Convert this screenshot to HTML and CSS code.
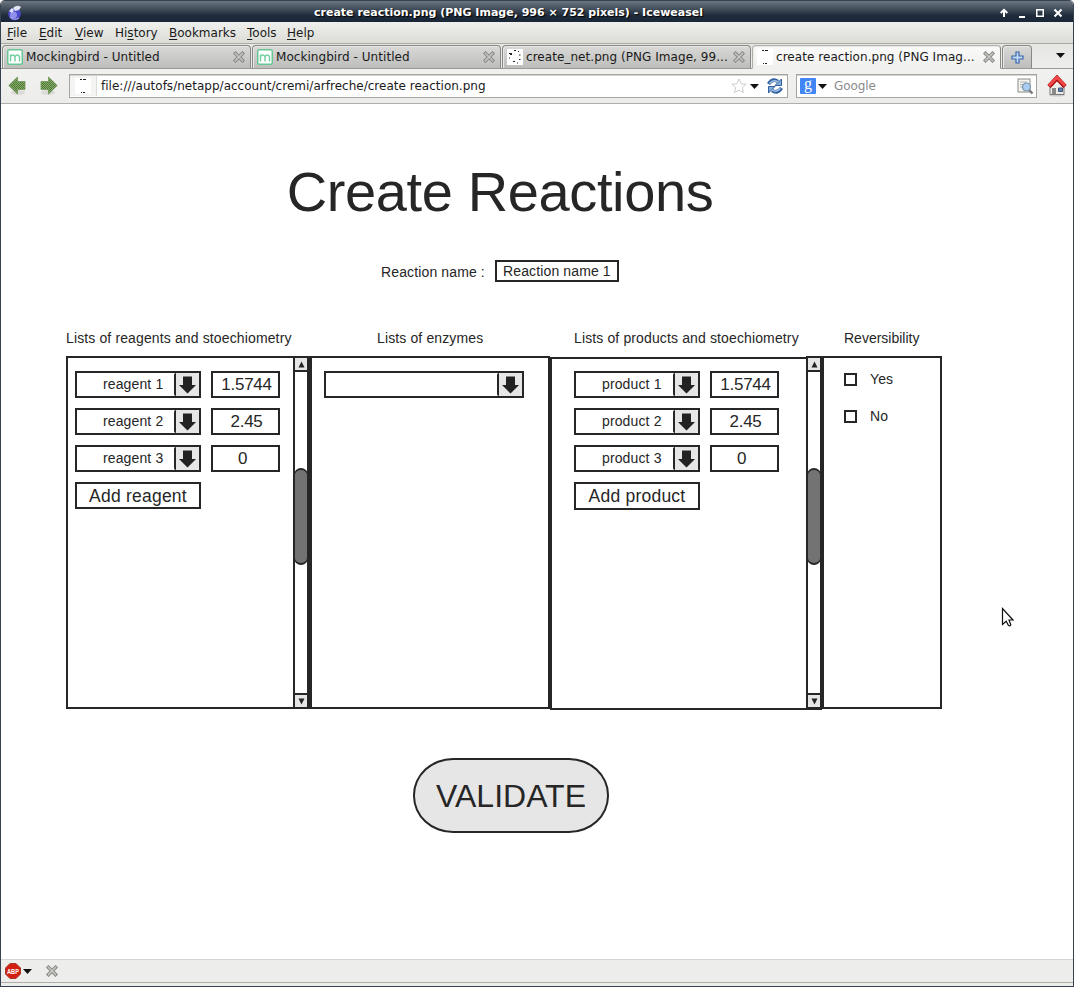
FILE: index.html
```html
<!DOCTYPE html>
<html lang="en">
<head>
<meta charset="utf-8">
<title>create reaction.png</title>
<link rel="stylesheet" href="styles.css">
</head>
<body>
<svg class="defs" width="0" height="0" aria-hidden="true">
  <defs>
    <pattern id="dither" width="2" height="2" patternUnits="userSpaceOnUse"><rect width="2" height="2" fill="#86ab6c"/><path d="M0 0h1v1H0zM1 1h1v1H1z" fill="#4d7a33"/></pattern>
    <symbol id="close" viewBox="0 0 12 12"><path d="M2.500 2.500l7 7m0-7l-7 7" stroke="#868783" stroke-width="3.600" stroke-linecap="square"/><path d="M2.500 2.500l7 7m0-7l-7 7" stroke="#c6c7c3" stroke-width="1.600" stroke-linecap="square"/></symbol>
    <symbol id="drop" viewBox="0 0 9 5"><path d="M0 0h9L4.500 5z" fill="#111"/></symbol>
    <symbol id="bird" viewBox="0 0 16 16"><rect x=".75" y=".75" width="14.500" height="14.500" rx="1.500" fill="#fff" stroke="#66c795" stroke-width="1.500"/><path d="M3.500 12.500V5.500M3.500 7.500q2.200-3 4.500 0v5M8 7.500q2.400-3 4.500 0v5" fill="none" stroke="#6fcf9e" stroke-width="1.400"/></symbol>
    <symbol id="arrow" viewBox="0 0 17 18"><path d="M4 .5h9V9h4l-8.500 8.500L0 9h4z" fill="#222"/></symbol>
    <symbol id="page" viewBox="0 0 16 16"><rect width="16" height="16" fill="#fff"/><path d="M5 1.500h2M8 1.500h3M6 14.500h1M8 14.500h2" stroke="#222"/></symbol>
    <symbol id="nav" viewBox="0 0 18 20"><ellipse cx="10" cy="16.500" rx="7" ry="2.500" fill="#dadad8"/><path d="M.8 9.500L9.500 1v4.500H17v8H9.500V18z" fill="url(#dither)" stroke="#6c9152" stroke-width=".7"/></symbol>
  </defs>
</svg>
<div class="window">
  <header class="titlebar">
    <svg class="app-icon" width="16" height="16" viewBox="0 0 16 16"><circle cx="7.500" cy="9" r="6.300" fill="#4a4ac9"/><circle cx="6.500" cy="10" r="3.500" fill="#8f90ee"/><path d="M2 6l3-3 2 2-2 3zM6 3q4-4 8-1l-2 3-4 1z" fill="#dfe3f5"/><path d="M3 12q4 4 9 1" stroke="#b5b6ef" fill="none"/></svg>
    <div class="title">create reaction.png (PNG Image, 996 × 752 pixels) - Iceweasel</div>
    <svg class="controls" width="68" height="16" viewBox="0 0 68 16" fill="none" stroke="#fff" stroke-width="2"><path d="M7 12V5M3.700 8L7 4.800 10.300 8"/><path d="M22 12H28" stroke-width="2"/><rect x="39.750" y="4.750" width="6.500" height="6.500" stroke-width="1.500"/><path d="M57.500 4.500l7 7m0-7l-7 7"/></svg>
  </header>
  <nav class="menu"><span class="m1"><u>F</u>ile</span><span class="m2"><u>E</u>dit</span><span class="m3"><u>V</u>iew</span><span class="m4">Hi<u>s</u>tory</span><span class="m5"><u>B</u>ookmarks</span><span class="m6"><u>T</u>ools</span><span><u>H</u>elp</span></nav>
  <div class="tabs">
    <div class="tab"><svg width="16" height="16"><use href="#bird"/></svg><span class="label">Mockingbird - Untitled</span><svg width="12" height="12"><use href="#close"/></svg></div>
    <div class="tab"><svg width="16" height="16"><use href="#bird"/></svg><span class="label">Mockingbird - Untitled</span><svg width="12" height="12"><use href="#close"/></svg></div>
    <div class="tab"><svg width="16" height="16" viewBox="0 0 16 16"><rect width="16" height="16" fill="#fff"/><path d="M2 4.500h3M3 5.500h2M7 1.500h2M11 2.500h1M12 6h1.500M12 10.500h1.500M6 12.500h2M10 14h1M2 9h1" stroke="#222"/></svg><span class="label">create_net.png (PNG Image, 99...</span><svg width="12" height="12"><use href="#close"/></svg></div>
    <div class="tab active"><svg width="16" height="16"><use href="#page"/></svg><span class="label">create reaction.png (PNG Imag...</span><svg width="12" height="12"><use href="#close"/></svg></div>
    <div class="tab new"><svg width="13" height="13" viewBox="0 0 13 13"><path d="M5 1h3v4h4v3H8v4H5V8H1V5h4z" fill="#c4dcf4" stroke="#3566ad" stroke-width="1.200"/></svg></div>
    <svg class="all-tabs" width="9" height="5"><use href="#drop"/></svg>
  </div>
  <div class="toolbar">
    <svg class="back" width="18" height="20"><use href="#nav"/></svg>
    <svg class="forward" width="18" height="20"><use href="#nav"/></svg>
    <div class="field url">
      <span class="identity"><svg width="16" height="16"><use href="#page"/></svg></span>
      <span class="address">file:///autofs/netapp/account/cremi/arfreche/create reaction.png</span>
      <svg class="star" width="16" height="16" viewBox="0 0 16 16"><path d="M8 1l2.100 4.700 5 .5-3.700 3.400 1 5L8 12.200l-4.500 2.400 1.100-5L.9 6.200l5-.5z" fill="#fff" stroke="#ccc"/></svg>
      <svg class="url-drop" width="9" height="5"><use href="#drop"/></svg>
      <svg width="16" height="16" viewBox="0 0 16 16"><g fill="none" stroke="#2f5f9f" stroke-width="3.600"><path d="M1.500 6q4-6 9.500-2.500M14.500 10q-4 6-9.500 2.500"/></g><path d="M14.500 1v6.500H8zM1.500 15V8.500H8z" fill="#82add9" stroke="#2f5f9f"/><path d="M2.500 5.500q4-4.500 8.500-1.500M13.500 10.500q-4 4.500-8.500 1.500" fill="none" stroke="#a5c6e8" stroke-width="1.400"/></svg>
    </div>
    <div class="field search">
      <span class="engine">g</span>
      <svg width="9" height="5"><use href="#drop"/></svg>
      <span class="hint">Google</span>
      <svg width="17" height="17" viewBox="0 0 17 17"><rect x="1" y="1" width="12" height="13" fill="#f4f4f2" stroke="#8b8d89"/><path d="M3 4h7M3 6.500h4M3 9h3" stroke="#b4b6b2"/><path d="M12 12l3.500 3.500" stroke="#777" stroke-width="2.400"/><circle cx="9.500" cy="9" r="4" fill="#a9cdf0" stroke="#7d93a9" stroke-width="1.200"/></svg>
    </div>
    <svg class="home" width="20" height="22" viewBox="0 0 20 22"><ellipse cx="10" cy="20" rx="8" ry="1.600" fill="#ccc"/><path d="M3 11l7-7 7 7v8.500H3z" fill="#ededeb" stroke="#777"/><path d="M2 11.500l8-8.500 8 8.500" fill="none" stroke="#a40000" stroke-width="4.600"/><path d="M2 10.800L10 2.500l8 8.300" fill="none" stroke="#f04848" stroke-width="3"/><path d="M5 13h4v6.500H5z" fill="#888a85"/><path d="M11.500 13h4v3.500h-4z" fill="#5c85bb" stroke="#44546b"/></svg>
  </div>

  <main class="page">
    <h1>Create Reactions</h1>
    <div class="name-row"><label>Reaction name :</label><div class="name-box">Reaction name 1</div></div>
    <div class="columns headings">
      <div>Lists of reagents and stoechiometry</div><div class="h-enzymes">Lists of enzymes</div><div class="h-products">Lists of products and stoechiometry</div><div class="h-rev">Reversibility</div>
    </div>
    <div class="columns">
      <section class="panel reagents">
        <div class="controls-grid">
          <div class="combo"><span>reagent 1</span><b><svg width="17" height="18"><use href="#arrow"/></svg></b></div><div class="value">1.5744</div>
          <div class="combo"><span>reagent 2</span><b><svg width="17" height="18"><use href="#arrow"/></svg></b></div><div class="value">2.45</div>
          <div class="combo"><span>reagent 3</span><b><svg width="17" height="18"><use href="#arrow"/></svg></b></div><div class="value zero">0</div>
          <div class="add">Add reagent</div>
        </div>
        <div class="scroll"><i class="up"><svg width="7" height="7" viewBox="0 0 7 7"><path d="M3.500 .5L6.500 6.500h-6z" fill="#222"/></svg></i><div class="thumb"></div><i class="down"><svg width="7" height="7" viewBox="0 0 7 7"><path d="M3.500 6.500L6.500 .5h-6z" fill="#222"/></svg></i></div>
      </section>
      <section class="panel enzymes">
        <div class="combo"><span></span><b><svg width="17" height="18"><use href="#arrow"/></svg></b></div>
      </section>
      <section class="panel products">
        <div class="controls-grid">
          <div class="combo"><span>product 1</span><b><svg width="17" height="18"><use href="#arrow"/></svg></b></div><div class="value">1.5744</div>
          <div class="combo"><span>product 2</span><b><svg width="17" height="18"><use href="#arrow"/></svg></b></div><div class="value">2.45</div>
          <div class="combo"><span>product 3</span><b><svg width="17" height="18"><use href="#arrow"/></svg></b></div><div class="value zero">0</div>
          <div class="add">Add product</div>
        </div>
        <div class="scroll"><i class="up"><svg width="7" height="7" viewBox="0 0 7 7"><path d="M3.500 .5L6.500 6.500h-6z" fill="#222"/></svg></i><div class="thumb"></div><i class="down"><svg width="7" height="7" viewBox="0 0 7 7"><path d="M3.500 6.500L6.500 .5h-6z" fill="#222"/></svg></i></div>
      </section>
      <section class="panel reversibility">
        <div class="check"><i></i>Yes</div>
        <div class="check"><i></i>No</div>
      </section>
    </div>
    <div class="validate">VALIDATE</div>
    <svg class="cursor" width="14" height="21" viewBox="0 0 14 21"><path d="M1.500 1.500v16l3.700-3.300L7.500 18.500q1.500 1 2.300-.7L8 13h4z" fill="#fff" stroke="#111" stroke-width="1.200"/></svg>
  </main>

  <footer class="status">
    <svg width="16" height="16" viewBox="0 0 16 16"><path d="M5 .5h6L15.500 5v6L11 15.500H5L.5 11V5z" fill="#d3200e" stroke="#a5392b"/><text x="8" y="10.700" text-anchor="middle" textLength="12" lengthAdjust="spacingAndGlyphs" class="abp">ABP</text></svg>
    <svg class="abp-drop" width="9" height="5"><use href="#drop"/></svg>
    <svg class="status-close" width="12" height="12"><use href="#close"/></svg>
  </footer>
</div>
</body>
</html>
```
FILE: styles.css
```css
* { box-sizing: border-box; }
body { margin: 0; background: #fff; }
svg { display: block; flex: none; }
.defs { position: absolute; }
.window {
  display: flex; flex-direction: column; width: 1074px; height: 987px;
  border: solid #36424f; border-width: 0 1px 1px; border-radius: 5px 5px 0 0; overflow: hidden;
  font: 12px/16px "DejaVu Sans", sans-serif; color: #1a1a1a; background: #fff;
}
.titlebar {
  display: flex; align-items: center; flex: none; height: 22px; padding: 2px 8px 0 6px;
  border-top: 1px solid #36424f;
  background: linear-gradient(#6b7580, #46515e 35%, #1f2b3b 70%, #1a2738);
}
.title { flex: 1; padding-right: 3px; text-align: center; color: #fff; font-weight: bold; font-size: 11px; text-shadow: 1px 1px 1px #000; white-space: pre; }
.menu { display: flex; flex: none; height: 22px; padding: 3px 0 0 6px; border-bottom: 1px solid #a9aaa2; background: linear-gradient(#efefed, #dcddd7); }
.menu u { text-underline-offset: 2px; }
.m1 { width: 32px; } .m2 { width: 36px; } .m3 { width: 40px; } .m4 { width: 54px; } .m5 { width: 78px; } .m6 { width: 40px; }
.tabs { display: flex; flex: none; height: 25px; padding: 1px 0 0 1px; background: linear-gradient(#e6e6e3, #ededeb); border-bottom: 1px solid #999a94; }
.tab {
  display: flex; align-items: center; width: 249px; height: 24px; margin-right: 1px; padding: 0 5px 0 4px;
  border: 1px solid #888982; border-bottom-color: #999a94; border-radius: 4px 4px 0 0;
  background: linear-gradient(#d9d9d7, #bdbdbb); box-shadow: inset 1px 1px #e8e8e6;
}
.label { flex: 1; padding-left: 3px; white-space: pre; overflow: hidden; letter-spacing: .05px; }
.tab.active { background: linear-gradient(#fafafa, #f0f0ee); border-color: #b0b0ab #888982 #f0f0ee #b0b0ab; }
.tab.new { width: 30px; padding: 0; justify-content: center; }
.all-tabs { margin: 8px 0 0 23px; }
.toolbar { display: flex; align-items: center; flex: none; height: 35px; border-bottom: 1px solid #b0b0aa; padding-left: 7px; background: linear-gradient(#f1f1ef, #ececea); }
.forward { transform: scaleX(-1); margin-left: 14px; }
.field { display: flex; align-items: center; height: 24px; background: #fff; border: 1px solid #a5a69f; box-shadow: inset 0 1px #d5d5d0; }
.url { width: 719px; margin-left: 11px; padding-right: 4px; }
.identity { display: flex; align-items: center; width: 27px; height: 20px; padding-left: 5px; border-right: 1px solid #ddd; background: #f4f4f2; }
.address { flex: 1; padding-left: 4px; white-space: pre; letter-spacing: .015px; }
.url-drop { margin: 0 8px 0 3px; }
.search { width: 241px; margin-left: 8px; padding: 0 2px 0 3px; }
.engine { width: 16px; height: 16px; margin-right: 2px; border-radius: 1px; background: #4285f4; color: #fff; font: 16px/12px "Liberation Serif", serif; text-align: center; }
.hint { flex: 1; padding-left: 7px; color: #8b8b8b; letter-spacing: -.1px; }
.home { margin-left: 10px; }

.page { position: relative; flex: 1; padding: 52px 0 0 65px; color: #262626; font: 14px/18px "Liberation Sans", Arial, sans-serif; letter-spacing: .13px; background: #fff; }
h1 { width: 868px; height: 70px; margin: 0; font: 56px/71px "Liberation Sans", Arial, sans-serif; letter-spacing: -.37px; text-align: center; }
.name-row { display: flex; align-items: center; gap: 10px; padding-left: 315px; margin-top: 34px; height: 22px; }
.name-row label { width: 104px; padding-top: 2px; white-space: pre; }
.name-box { width: 124px; height: 22px; border: 2px solid #262626; padding-left: 6px; white-space: pre; }
.columns { display: grid; grid-template-columns: 244px 240px 272px 120px; align-items: start; }
.headings { margin-top: 47px; height: 27px; white-space: nowrap; }
.h-enzymes { padding-left: 67px; } .h-products { padding-left: 24px; } .h-rev { padding-left: 22px; }
.panel { display: flex; height: 353px; border: 2px solid #262626; }
.reagents, .products { border-right: 0; }
.controls-grid { flex: 1; display: grid; grid-template-columns: 126px 69px; grid-auto-rows: 27px; gap: 10px; align-content: start; padding: 13px 0 0 7px; }
.products .controls-grid { padding: 12px 0 0 22px; }
.products { margin-top: 1px; }
.combo { display: flex; width: 126px; height: 27px; border: 2px solid #262626; }
.combo span { flex: 1; padding: 2px 0 0 26px; white-space: nowrap; }
.combo b { display: flex; align-items: center; justify-content: center; width: 25px; background: #e6e6e6; border-left: 2px solid #262626; border-radius: 2px; }
.value, .add { height: 27px; border: 2px solid #262626; text-align: center; font-size: 17px; line-height: 23px; letter-spacing: 0; }
.value { padding-left: 2px; letter-spacing: -.25px; }
.zero { padding: 0 6px 0 0; }
.add { font-size: 17.5px; line-height: 24px; letter-spacing: .22px; }
.products .add { height: 28px; }
.scroll { display: flex; flex-direction: column; justify-content: space-between; width: 17px; border: solid #262626; border-width: 0 3px 0 2px; }
.products .scroll { width: 16px; border-width: 2px; margin-top: -3px; margin-bottom: -1px; }
.scroll i { display: flex; align-items: center; justify-content: center; height: 14px; background: #e6e6e6; }
.up { border-bottom: 2px solid #262626; }
.down { border-top: 2px solid #262626; }
.thumb { width: 14px; height: 97px; margin: 0 -1px 33px; border: 2px solid #262626; border-width: 2px 1px; border-radius: 7px; background: #737373; }
.enzymes { padding: 13px 0 0 12px; }
.enzymes .combo { width: 200px; }
.reversibility { flex-direction: column; padding: 12px 0 0 20px; gap: 19px; }
.check { display: flex; align-items: center; gap: 13px; }
.check i { width: 13px; height: 13px; border: 2px solid #262626; }
.h-rev { letter-spacing: 0; }
.validate { width: 196px; height: 75px; margin: 48px 0 0 347px; border: 2px solid #262626; border-radius: 40px / 37px; background: #e6e6e6; font-size: 32px; line-height: 72px; letter-spacing: 0; text-align: center; }
.cursor { position: absolute; left: 1000px; top: 503px; }

.status { display: flex; align-items: center; flex: none; height: 27px; padding: 0 4px 4px; border-top: 1px solid #d5d5d3; background: linear-gradient(#ededeb 22px, #b0ada4 22px 23px, #ededeb 23px); }
.abp { font: bold 7px "Liberation Sans", Arial, sans-serif; fill: #fff; }
.abp-drop { margin-left: 2px; }
.status-close { margin-left: 14px; }
```
